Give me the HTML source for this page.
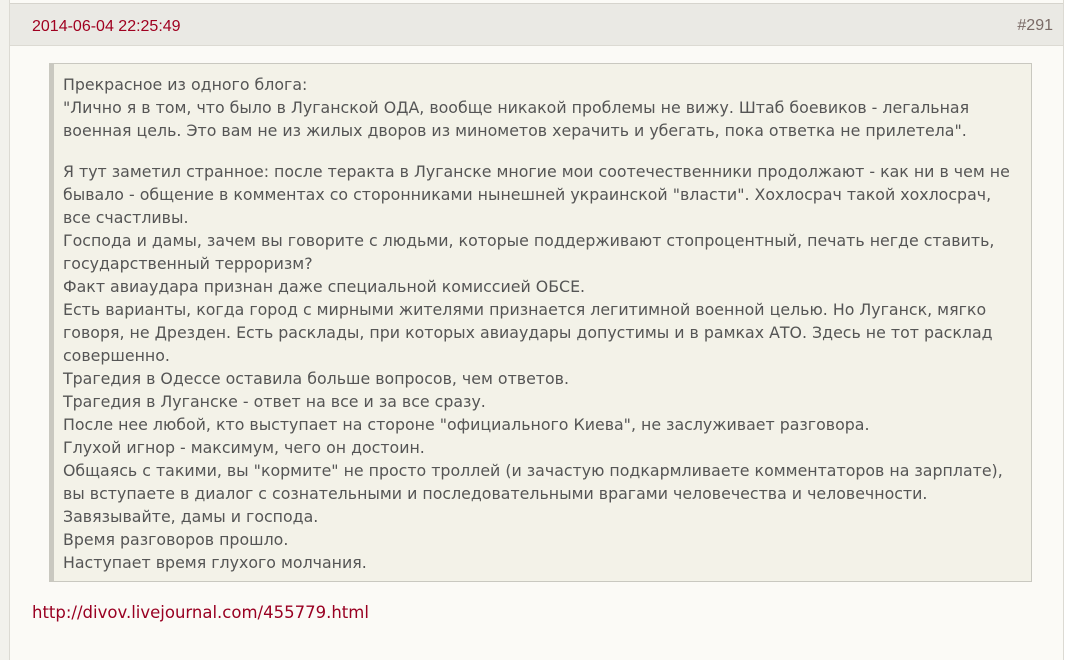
<!DOCTYPE html>
<html><head><meta charset="utf-8"><style>
html,body{margin:0;padding:0;width:1092px;height:660px;overflow:hidden;background:#fff}
.left{position:absolute;left:0;top:0;width:9px;height:660px;background:#f2f1ec;border-right:1px solid #dcdad3}
.main{position:absolute;left:10px;top:0;width:1053px;height:660px;background:#fbfaf6;border-right:1px solid #dcdad3}
.hdr{position:absolute;left:10px;top:3px;width:1053px;height:41px;background:#eae9e4;border-top:1px solid #d6d4cd;border-bottom:1px solid #dcdad3}
.date{position:absolute;left:22px;top:14px;font:16px "Liberation Sans",sans-serif;color:#a00020}
.num{position:absolute;right:10px;top:13px;font:16px "Liberation Sans",sans-serif;color:#7a6a66}
.q{position:absolute;left:49px;top:63px;width:968px;height:508px;background:#f3f2e8;border:1px solid #c9c8c0;border-left:5px solid #c9c8c0;padding:9px 0 0 9px;font:15.8px "DejaVu Sans",sans-serif;color:#555;line-height:23px;white-space:nowrap}
.q p{margin:0}
.q p+p{margin-top:18px}
.link{position:absolute;left:32px;top:603px;font:16.5px "DejaVu Sans",sans-serif;color:#990022}
</style></head><body>
<div class="left"></div><div class="main"></div>
<div class="hdr"><div class="date">2014-06-04 22:25:49</div><div class="num">#291</div></div>
<div class="q">
<p>Прекрасное из одного блога:<br>"Лично я в том, что было в Луганской ОДА, вообще никакой проблемы не вижу. Штаб боевиков - легальная<br>военная цель. Это вам не из жилых дворов из минометов херачить и убегать, пока ответка не прилетела".</p>
<p>Я тут заметил странное: после теракта в Луганске многие мои соотечественники продолжают - как ни в чем не<br>бывало - общение в комментах со сторонниками нынешней украинской "власти". Хохлосрач такой хохлосрач,<br>все счастливы.<br>Господа и дамы, зачем вы говорите с людьми, которые поддерживают стопроцентный, печать негде ставить,<br>государственный терроризм?<br>Факт авиаудара признан даже специальной комиссией ОБСЕ.<br>Есть варианты, когда город с мирными жителями признается легитимной военной целью. Но Луганск, мягко<br>говоря, не Дрезден. Есть расклады, при которых авиаудары допустимы и в рамках АТО. Здесь не тот расклад<br>совершенно.<br>Трагедия в Одессе оставила больше вопросов, чем ответов.<br>Трагедия в Луганске - ответ на все и за все сразу.<br>После нее любой, кто выступает на стороне "официального Киева", не заслуживает разговора.<br>Глухой игнор - максимум, чего он достоин.<br>Общаясь с такими, вы "кормите" не просто троллей (и зачастую подкармливаете комментаторов на зарплате),<br>вы вступаете в диалог с сознательными и последовательными врагами человечества и человечности.<br>Завязывайте, дамы и господа.<br>Время разговоров прошло.<br>Наступает время глухого молчания.</p>
</div>
<div class="link">http://divov.livejournal.com/455779.html</div>
</body></html>
